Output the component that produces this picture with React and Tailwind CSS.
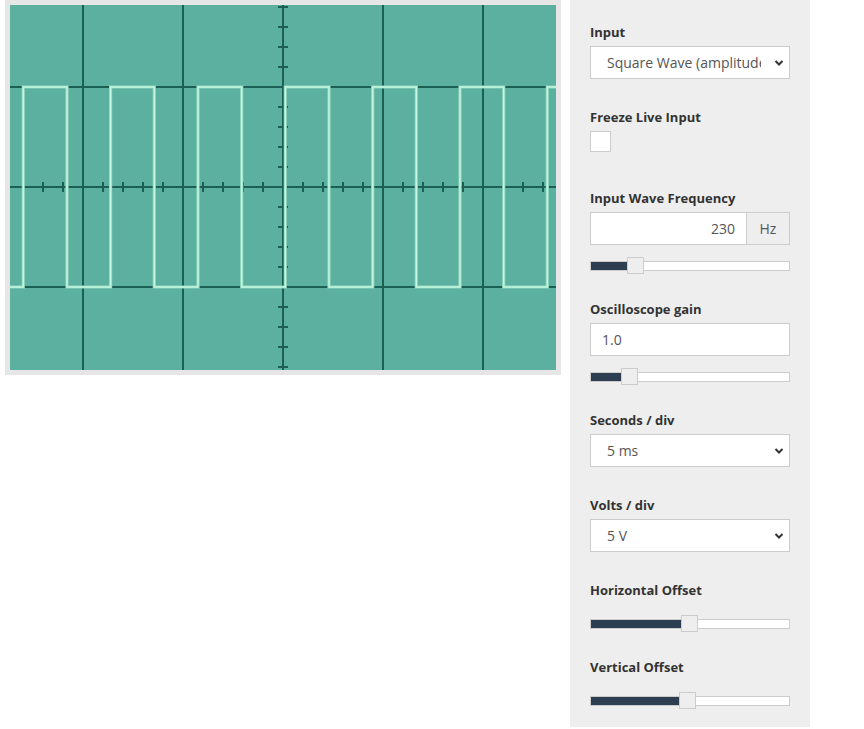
import React from "react";

const GRID = "#1c5f54";
const W = 546;
const H = 365;

function Scope() {
  const vLines = [73, 173, 273, 373, 473];
  const hLines = [82, 182, 282];
  const vTicks = [];
  for (let y = 2; y <= 362; y += 20) vTicks.push(y);
  const hTicks = [];
  for (let x = 13; x <= 533; x += 20) hTicks.push(x);
  const half = 43.67;
  let d = "M0 282";
  let x = 13.3;
  let high = false;
  while (x < W) {
    const y1 = high ? 82 : 282;
    const y2 = high ? 282 : 82;
    d += ` L${x.toFixed(1)} ${y1} L${x.toFixed(1)} ${y2}`;
    high = !high;
    x += half;
  }
  d += ` L${W} ${high ? 82 : 282}`;
  return (
    <svg width={W} height={H} viewBox={`0 0 ${W} ${H}`} className="block">
      <rect width={W} height={H} fill="#5cb0a0" />
      {vLines.map((vx) => (
        <line key={"v" + vx} x1={vx} y1={0} x2={vx} y2={H} stroke={GRID} strokeWidth={2} />
      ))}
      {hLines.map((hy) => (
        <line key={"h" + hy} x1={0} y1={hy} x2={W} y2={hy} stroke={GRID} strokeWidth={2} />
      ))}
      {vTicks.map((ty) => (
        <line key={"vt" + ty} x1={268} y1={ty} x2={278} y2={ty} stroke={GRID} strokeWidth={2} />
      ))}
      {hTicks.map((tx) => (
        <line key={"ht" + tx} x1={tx} y1={177} x2={tx} y2={187} stroke={GRID} strokeWidth={2} />
      ))}
      <path d={d} fill="none" stroke="#8fd8bd" strokeWidth={3.2} strokeLinejoin="miter" />
      <path d={d} fill="none" stroke="#c6f6e0" strokeWidth={1.4} strokeLinejoin="miter" />
    </svg>
  );
}

function Label({ children }) {
  return (
    <div className="text-[13px] leading-[18px] font-bold text-[#333] mb-[5px]">{children}</div>
  );
}

function Chevron() {
  return (
    <svg
      width="10"
      height="7"
      viewBox="0 0 10 7"
      className="absolute right-[6px] top-1/2 -translate-y-1/2 pointer-events-none"
    >
      <polyline points="1.5,1.5 5,5 8.5,1.5" fill="none" stroke="#333" strokeWidth="2" />
    </svg>
  );
}

function Select({ value }) {
  return (
    <div className="relative w-[200px] h-[33px]">
      <select
        defaultValue={value}
        className="appearance-none w-full h-full border border-[#ccc] bg-white pl-4 pr-[28px] text-[14px] text-[#555] outline-none"
      >
        <option value={value}>{value}</option>
      </select>
      <Chevron />
    </div>
  );
}

function Slider({ pos }) {
  return (
    <div className="relative w-[200px] h-[10px] border border-[#ccc] bg-white">
      <div className="h-full bg-[#2c3e50]" style={{ width: pos }} />
      <div
        className="absolute top-[-5px] w-[17px] h-[17px] bg-[#eee] border border-[#ccc]"
        style={{ left: pos - 1 }}
      />
    </div>
  );
}

export default function App() {
  return (
    <div
      className="flex items-start bg-white min-h-[729px]"
      style={{ fontFamily: '"Open Sans", "Liberation Sans", sans-serif' }}
    >
      <div className="ml-[5px] w-[556px] h-[375px] bg-[#e6e6e6] p-[5px]">
        <Scope />
      </div>
      <div className="ml-[9px] w-[240px] bg-[#eee] px-5 pt-[23px] pb-[21px]">
        <Label>Input</Label>
        <Select value="Square Wave (amplitude 5V)" />

        <div className="mt-[29px]">
          <Label>Freeze Live Input</Label>
          <div className="w-[21px] h-[21px] bg-white border border-[#ccc]" />
        </div>

        <div className="mt-[37px]">
          <Label>Input Wave Frequency</Label>
          <div className="flex w-[200px] h-[33px]">
            <div className="flex-1 border border-[#ccc] bg-white flex items-center justify-end pr-[11px] text-[14px] text-[#555]">
              230
            </div>
            <div className="w-[43px] border border-l-0 border-[#ccc] bg-[#eee] flex items-center justify-center text-[14px] text-[#555]">
              Hz
            </div>
          </div>
          <div className="mt-4">
            <Slider pos={37} />
          </div>
        </div>

        <div className="mt-[29px]">
          <Label>Oscilloscope gain</Label>
          <div className="w-[200px] h-[33px] border border-[#ccc] bg-white flex items-center pl-[11px] text-[14px] text-[#555]">
            1.0
          </div>
          <div className="mt-4">
            <Slider pos={31} />
          </div>
        </div>

        <div className="mt-[29px]">
          <Label>Seconds / div</Label>
          <Select value="5 ms" />
        </div>

        <div className="mt-[29px]">
          <Label>Volts / div</Label>
          <Select value="5 V" />
        </div>

        <div className="mt-[29px]">
          <Label>Horizontal Offset</Label>
          <div className="mt-[20px]">
            <Slider pos={91} />
          </div>
        </div>

        <div className="mt-[29px]">
          <Label>Vertical Offset</Label>
          <div className="mt-[20px]">
            <Slider pos={89} />
          </div>
        </div>
      </div>
    </div>
  );
}
